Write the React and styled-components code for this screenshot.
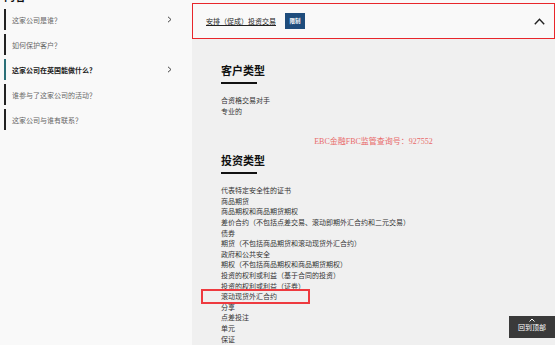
import React from "react";
import styled, { createGlobalStyle } from "styled-components";

const Global = createGlobalStyle`
  html, body { margin: 0; padding: 0; overflow: hidden; background: #f0f0f0; }
  body { font-family: "Noto Sans CJK SC", "Noto Sans", sans-serif; }
  * { box-sizing: border-box; }
`;

const Page = styled.div`
  display: flex;
  width: 555px;
  height: 345px;
  overflow: hidden;
`;

const Sidebar = styled.aside`
  width: 192px;
  flex: none;
  background: #f9f9f9;
  display: flex;
  flex-direction: column;
`;

const SideTitle = styled.h3`
  margin: -10px 0 0 4px;
  height: 13px;
  font-size: 11px;
  line-height: 13px;
  font-weight: 700;
  color: #111;
`;

const NavList = styled.ul`
  list-style: none;
  margin: 6px 20px 0 4px;
  padding: 0;
  display: flex;
  flex-direction: column;
  gap: 4px;
`;

const NavItem = styled.li`
  height: 21px;
  display: flex;
  align-items: center;
  justify-content: space-between;
  border-left: 2px solid ${(p) => (p.$active ? "#2b6f77" : "#222")};
  padding-left: 6px;
  font-size: 7px;
  font-weight: ${(p) => (p.$active ? 700 : 400)};
  color: ${(p) => (p.$active ? "#222" : "#666")};
`;

const Main = styled.main`
  flex: 1;
  display: flex;
  flex-direction: column;
  background: #f9f9f9;
  padding-top: 3px;
`;

const Card = styled.div`
  height: 36px;
  flex: none;
  border: 1.5px solid #e8262b;
  background: #f9f9f9;
  display: flex;
  align-items: center;
  padding: 0 9px 0 13px;
`;

const CardTitle = styled.span`
  font-size: 7px;
  color: #222;
  text-decoration: underline;
  text-underline-offset: 1px;
`;

const Badge = styled.span`
  margin-left: 9px;
  width: 20px;
  height: 16px;
  background: #1e4c7c;
  color: #fff;
  font-size: 5.5px;
  font-weight: 700;
  display: flex;
  align-items: center;
  justify-content: center;
`;

const Toggle = styled.span`
  margin-left: auto;
  display: flex;
  align-items: center;
`;

const Panel = styled.section`
  flex: 1;
  background: #f0f0f0;
  padding: 24px 29px 0;
`;

const Heading = styled.h2`
  margin: 0;
  font-size: 11px;
  line-height: 14px;
  font-weight: 700;
  color: #111;
  &::after {
    content: "";
    display: block;
    width: 36px;
    height: 2px;
    margin-top: 5px;
    background: #111;
  }
`;

const List = styled.ul`
  list-style: none;
  margin: 11px 0 0;
  padding: 0;
`;

const Item = styled.li`
  position: relative;
  font-size: 7px;
  line-height: 10.6px;
  height: 10.6px;
  color: #333;
  white-space: nowrap;
`;

const Mark = styled.span`
  position: absolute;
  left: -20px;
  top: -2px;
  width: 109px;
  height: 15px;
  border: 2px solid #ee3a3f;
  pointer-events: none;
`;

const Watermark = styled.div`
  margin: 20px -29px 5px;
  text-align: center;
  font-family: "Liberation Serif", "Noto Sans CJK SC", serif;
  font-size: 8px;
  line-height: 12px;
  color: #e86a6a;
`;

const BackTop = styled.button`
  position: fixed;
  right: 0;
  bottom: 7px;
  width: 46px;
  height: 22px;
  border: none;
  padding: 2px 0 0;
  background: #3a3a3a;
  color: #fff;
  font-family: "Noto Sans CJK SC", sans-serif;
  font-size: 7px;
  line-height: 9px;
  display: flex;
  flex-direction: column;
  align-items: center;
  gap: 1px;
`;

const Chevron = ({ dir = "right" }) =>
  dir === "right" ? (
    <svg width="5" height="7" viewBox="0 0 5 7">
      <polyline points="1,0.8 4,3.5 1,6.2" fill="none" stroke="#444" strokeWidth="1" />
    </svg>
  ) : (
    <svg width="11" height="7" viewBox="0 0 11 7">
      <polyline points="0.8,6.2 5.5,1.2 10.2,6.2" fill="none" stroke="#222" strokeWidth="1.4" />
    </svg>
  );

const nav = [
  { t: "这家公司是谁？", c: true },
  { t: "如何保护客户？" },
  { t: "这家公司在英国能做什么？", c: true, a: true },
  { t: "谁参与了这家公司的活动？" },
  { t: "这家公司与谁有联系？" },
];

const invest = [
  "代表特定安全性的证书",
  "商品期货",
  "商品期权和商品期货期权",
  "差价合约（不包括点差交易、滚动即期外汇合约和二元交易）",
  "债券",
  "期货（不包括商品期货和滚动现货外汇合约）",
  "政府和公共安全",
  "期权（不包括商品期权和商品期货期权）",
  "投资的权利或利益（基于合同的投资）",
  "投资的权利或利益（证券）",
  "滚动现货外汇合约",
  "分享",
  "点差投注",
  "单元",
  "保证",
];

export default function App() {
  return (
    <>
      <Global />
      <Page>
        <Sidebar>
          <SideTitle>内容</SideTitle>
          <NavList>
            {nav.map((n) => (
              <NavItem key={n.t} $active={n.a}>
                <span>{n.t}</span>
                {n.c && <Chevron />}
              </NavItem>
            ))}
          </NavList>
        </Sidebar>
        <Main>
          <Card>
            <CardTitle>安排（促成）投资交易</CardTitle>
            <Badge>限制</Badge>
            <Toggle>
              <Chevron dir="up" />
            </Toggle>
          </Card>
          <Panel>
            <Heading>客户类型</Heading>
            <List>
              <Item>合资格交易对手</Item>
              <Item>专业的</Item>
            </List>
            <Watermark>EBC金融FBC监管查询号：927552</Watermark>
            <Heading>投资类型</Heading>
            <List>
              {invest.map((t) => (
                <Item key={t}>
                  {t === "滚动现货外汇合约" && <Mark />}
                  {t}
                </Item>
              ))}
            </List>
          </Panel>
        </Main>
      </Page>
      <BackTop>
        <svg width="6" height="4" viewBox="0 0 6 4">
          <polyline points="0.5,3.5 3,1 5.5,3.5" fill="none" stroke="#fff" strokeWidth="1" />
        </svg>
        <span>回到顶部</span>
      </BackTop>
    </>
  );
}
